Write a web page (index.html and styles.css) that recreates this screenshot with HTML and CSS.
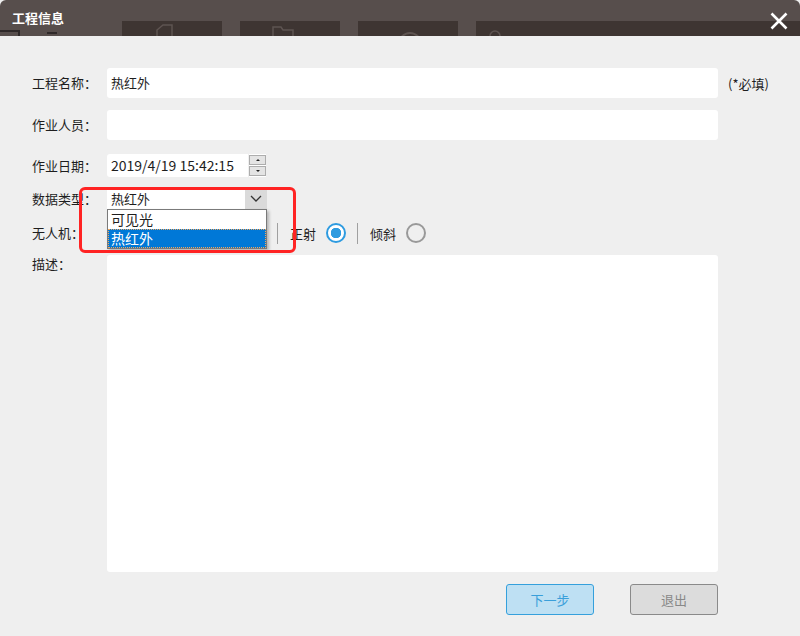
FILE: index.html
```html
<!DOCTYPE html>
<html>
<head>
  <meta charset="UTF-8">
  <title>工程信息</title>
  <link rel="stylesheet" href="styles.css">
</head>
<body>
  <div class="window">
    <!-- title bar, with the launcher tiles of the main window peeking through -->
    <div class="titlebar">
      <div class="strip">
        <span class="frag frag-a"></span>
        <span class="frag frag-b"></span>
        <div class="tile tile-1">
          <svg width="30" height="15" viewBox="0 0 30 15"><path d="M10 15V9l6-5h9v11" fill="none" stroke="#5e5451" stroke-width="1.5"/></svg>
        </div>
        <div class="tile tile-2">
          <svg width="40" height="15" viewBox="0 0 40 15"><path d="M13 15V6h8l2 3h10v6" fill="none" stroke="#5e5451" stroke-width="1.5"/></svg>
        </div>
        <div class="tile tile-3">
          <svg width="40" height="15" viewBox="0 0 40 15"><circle cx="22" cy="23" r="11" fill="none" stroke="#5e5451" stroke-width="2"/></svg>
        </div>
        <div class="tile tile-4">
          <svg width="40" height="15" viewBox="0 0 40 15"><circle cx="19" cy="15" r="5" fill="none" stroke="#5e5451" stroke-width="1.5"/></svg>
        </div>
      </div>
      <span class="title">工程信息</span>
      <svg class="close" width="18" height="18" viewBox="0 0 18 18"><path d="M1.5 1.5L16.5 16.5M16.5 1.5L1.5 16.5" stroke="#ffffff" stroke-width="2.6"/></svg>
    </div>

    <div class="content">
      <div class="row row-name">
        <span class="label">工程名称：</span>
        <div class="input">热红外</div>
        <span class="required">(*必填)</span>
      </div>

      <div class="row row-person">
        <span class="label">作业人员：</span>
        <div class="input"></div>
      </div>

      <div class="row row-date">
        <span class="label">作业日期：</span>
        <div class="date">2019/4/19 15:42:15</div>
        <div class="spin">
          <span class="spin-btn"><i class="tri-up"></i></span>
          <span class="spin-btn"><i class="tri-down"></i></span>
        </div>
      </div>

      <div class="row row-type">
        <span class="label">数据类型：</span>
        <div class="combo">
          <span class="combo-text">热红外</span>
          <span class="combo-arrow">
            <svg width="12" height="7" viewBox="0 0 12 7"><path d="M1 1l5 5 5-5" fill="none" stroke="#333" stroke-width="1.3"/></svg>
          </span>
          <ul class="dropdown">
            <li>可见光</li>
            <li class="selected">热红外</li>
          </ul>
        </div>
      </div>

      <div class="row row-uav">
        <span class="label">无人机：</span>
        <div class="uav-spacer"></div>
        <span class="sep"></span>
        <span class="opt">正射</span>
        <span class="radio checked"></span>
        <span class="sep"></span>
        <span class="opt">倾斜</span>
        <span class="radio"></span>
      </div>

      <div class="row row-desc">
        <span class="label">描述：</span>
        <div class="textarea"></div>
      </div>

      <div class="actions">
        <button class="btn btn-next">下一步</button>
        <button class="btn btn-quit">退出</button>
      </div>

      <!-- annotation box around the type dropdown -->
      <div class="highlight"></div>
    </div>
  </div>
</body>
</html>
```

FILE: styles.css
```css
/* Global styles */
html, body {
  margin: 0;
  padding: 0;
  background-color: #efefef;
  font-family: "Noto Sans CJK SC", "Microsoft YaHei", sans-serif;
  font-size: 13px;
  color: #1e1e1e;
}
.window {
  width: 800px;
  height: 636px;
  background-color: #efefef;
  overflow: hidden;
}
/* Title bar */
.titlebar {
  position: relative;
  height: 36px;
  background-color: #574e4c;
  border-radius: 6px 6px 0 0;
  overflow: hidden;
}
.strip {
  display: flex;
  align-items: flex-end;
  height: 15px;
  margin-top: 21px;
}
.frag {
  background-color: #2f2929;
}
.frag-a {
  width: 20px;
  height: 6px;
  background: none;
  border-top: 2px solid #2f2929;
  border-right: 2px solid #2f2929;
  box-sizing: border-box;
}
.frag-b {
  width: 10px;
  height: 2px;
  margin: 0 0 2px 27px;
}
.tile {
  height: 15px;
  background-color: #3e3532;
  overflow: hidden;
}
.tile svg {
  display: block;
}
.tile-1 { width: 100px; margin-left: 65px; padding-left: 25px; box-sizing: border-box; }
.tile-2 { width: 100px; margin-left: 18px; padding-left: 20px; box-sizing: border-box; }
.tile-3 { width: 100px; margin-left: 18px; padding-left: 30px; box-sizing: border-box; }
.tile-4 { flex: 1; margin-left: 18px; }
.title {
  position: absolute;
  left: 12px;
  top: 9px;
  color: #ffffff;
  font-size: 13px;
  font-weight: bold;
  line-height: 18px;
}
.close {
  position: absolute;
  right: 12px;
  top: 12px;
}
/* Form area */
.content {
  position: relative;
  padding: 32px 0 0 32px;
}
.row {
  display: flex;
  align-items: center;
}
.label {
  width: 75px;
  flex: none;
  line-height: 18px;
}
.row-person { margin-top: 12px; }
.row-date { margin-top: 14px; }
.row-type { margin-top: 11px; }
.row-uav { margin-top: 13px; height: 22px; }
.row-desc { margin-top: 11px; align-items: flex-start; }
.input {
  width: 611px;
  height: 30px;
  line-height: 30px;
  padding-left: 4px;
  box-sizing: border-box;
  background: #ffffff;
  border-radius: 3px;
}
.required {
  margin-left: 10px;
}
.date {
  width: 141px;
  height: 23px;
  line-height: 23px;
  padding-left: 4px;
  box-sizing: border-box;
  background: #ffffff;
  border-radius: 3px 0 0 3px;
  font-size: 14px;
}
.spin {
  display: flex;
  flex-direction: column;
  justify-content: space-between;
  width: 17px;
  height: 23px;
  margin-left: 1px;
  padding: 1px 0;
  box-sizing: border-box;
  background: #ffffff;
}
.spin-btn {
  display: flex;
  align-items: center;
  justify-content: center;
  height: 10px;
  background: #e4e4e4;
  border: 1px solid #adadad;
  box-sizing: border-box;
}
.tri-up, .tri-down {
  width: 0;
  height: 0;
  border-left: 2px solid transparent;
  border-right: 2px solid transparent;
}
.tri-up { border-bottom: 2px solid #222; }
.tri-down { border-top: 2px solid #222; }
/* Combo box with open list */
.combo {
  position: relative;
  display: flex;
  width: 160px;
  height: 21px;
}
.combo-text {
  flex: 1;
  background: #ffffff;
  line-height: 21px;
  padding-left: 4px;
}
.combo-arrow {
  display: flex;
  align-items: center;
  justify-content: center;
  width: 22px;
  background: #dadada;
}
.dropdown {
  position: absolute;
  top: 21px;
  left: 0;
  width: 160px;
  margin: 0;
  padding: 0;
  list-style: none;
  background: #ffffff;
  border: 1px solid #7a7a7a;
  box-sizing: border-box;
  box-shadow: 2px 2px 3px rgba(0, 0, 0, 0.25);
  z-index: 2;
}
.dropdown li {
  height: 19px;
  line-height: 19px;
  padding-left: 3px;
  font-size: 14px;
}
.dropdown li.selected {
  background: #0078d7;
  color: #ffffff;
  outline: 1px dotted #f0a860;
  outline-offset: -1px;
}
/* UAV row */
.uav-spacer {
  width: 170px;
}
.sep {
  width: 1px;
  height: 21px;
  background: #a0a0a0;
}
.opt {
  margin-left: 12px;
}
.radio {
  width: 20px;
  height: 20px;
  margin-left: 10px;
  margin-right: 11px;
  border: 2px solid #999999;
  border-radius: 50%;
  box-sizing: border-box;
}
.radio.checked {
  border-color: #2e9be0;
  background: radial-gradient(circle, #2e9be0 0 5px, #ffffff 5.5px);
}
.textarea {
  width: 611px;
  height: 317px;
  background: #ffffff;
  border-radius: 3px;
}
/* Buttons */
.actions {
  display: flex;
  justify-content: flex-end;
  gap: 36px;
  width: 686px;
  margin-top: 12px;
}
.btn {
  width: 88px;
  height: 31px;
  border-radius: 3px;
  font-family: inherit;
  font-size: 13px;
  cursor: pointer;
}
.btn-next {
  background: #bee0f3;
  border: 1px solid #35a0dc;
  color: #3a9fda;
}
.btn-quit {
  background: #dcdcdc;
  border: 1px solid #8a8a8a;
  color: #888888;
}
.highlight {
  position: absolute;
  left: 79px;
  top: 151px;
  width: 217px;
  height: 66px;
  border: 3px solid #ff2323;
  border-radius: 6px;
  box-sizing: border-box;
  z-index: 3;
}
```
